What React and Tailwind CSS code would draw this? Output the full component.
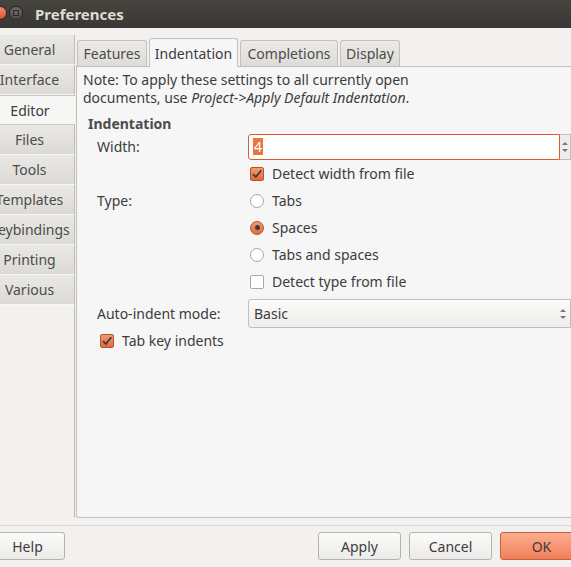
import React from "react";

const font = { fontFamily: '"Noto Sans", "Open Sans", sans-serif' };

const sideTabs = ["General", "Interface", "Editor", "Files", "Tools", "Templates", "Keybindings", "Printing", "Various"];
const topTabs = [
	{ label: "Features", w: "w-[70px]" },
	{ label: "Indentation", w: "w-[89px]" },
	{ label: "Completions", w: "w-[98px]" },
	{ label: "Display", w: "w-[60px]" },
];

const Check = ({ checked }) =>
	checked ? (
		<span className="w-[14px] h-[14px] rounded-[2px] border border-[#b8532b] bg-gradient-to-b from-[#f39a6f] to-[#e5683b] flex items-center justify-center">
			<svg width="12" height="12" viewBox="0 0 12 12">
				<path d="M2 6.2 L4.8 9 L10.3 2.2" fill="none" stroke="#3c3c3c" strokeWidth="1.8" />
			</svg>
		</span>
	) : (
		<span className="w-[14px] h-[14px] rounded-[2px] border border-[#a8a8a8] bg-white" />
	);

const Radio = ({ on }) =>
	on ? (
		<span className="w-[14px] h-[14px] rounded-full border border-[#b8532b] bg-gradient-to-b from-[#f39a6f] to-[#e5683b] flex items-center justify-center">
			<span className="w-[5px] h-[5px] rounded-full bg-[#3c3c3c]" />
		</span>
	) : (
		<span className="w-[14px] h-[14px] rounded-full border border-[#a8a8a8] bg-white" />
	);

const Row = ({ mark, label }) => (
	<div className="flex items-center gap-[8px] h-[27px] pl-[2px]">
		{mark}
		<span>{label}</span>
	</div>
);

const Arrows = () => (
	<svg width="8" height="14" viewBox="0 0 8 14">
		<path d="M1 5 L4 2 L7 5 Z" fill="#7a7a7a" />
		<path d="M1 9 L4 12 L7 9 Z" fill="#7a7a7a" />
	</svg>
);

const Btn = ({ children, className }) => (
	<div
		className={
			"h-[28px] rounded-[3px] border flex items-center justify-center " +
			(className || "border-[#b5b3ae] bg-gradient-to-b from-[#fbfbfa] to-[#ecebe9]")
		}
	>
		{children}
	</div>
);

export default function App() {
	return (
		<div className="w-[571px] h-[567px] overflow-hidden bg-[#f2f1f0] flex flex-col text-[14px] text-[#3c3c3c]" style={font}>
			<div className="h-[28px] shrink-0 bg-gradient-to-b from-[#45443f] to-[#393834] flex items-center relative">
				<span className="absolute left-[-7px] top-[6px] w-[14px] h-[14px] rounded-full bg-gradient-to-b from-[#f5896a] to-[#d8532b] border border-[#2a2926]" />
				<span className="absolute left-[9px] top-[6px] w-[14px] h-[14px] rounded-full bg-gradient-to-b from-[#6d6b66] to-[#4e4d49] border border-[#2a2926] flex items-center justify-center">
					<span className="w-[6px] h-[6px] border border-[#2e2d2a]" />
				</span>
				<span className="ml-[35px] font-bold text-[15px] text-[#dfdbd2]">Preferences</span>
			</div>

			<div className="flex flex-1 min-h-0 pt-[6px] pb-[7px]">
				<div className="w-[75px] shrink-0 overflow-hidden flex flex-col pt-[1px]">
					{sideTabs.map((t) => (
						<div
							key={t}
							className={
								"-ml-[15px] w-[90px] h-[30px] flex items-center justify-center whitespace-nowrap " +
								(t === "Editor"
									? "bg-[#f6f6f5] border-t border-b border-[#c9c6c1] text-[#3c3c3c]"
									: "bg-gradient-to-b from-[#eae8e5] to-[#dcdad6] border-b border-[#f7f6f5] border-r border-r-[#bfbcb7] text-[#4c4c4c]")
							}
						>
							{t}
						</div>
					))}
					<div className="flex-1 border-r border-[#bfbcb7]" />
				</div>

				<div className="flex-1 flex flex-col pl-[1px]">
					<div className="flex items-end h-[32px] pl-[1px] gap-[2px]">
						{topTabs.map((t) =>
							t.label === "Indentation" ? (
								<div
									key={t.label}
									className={t.w + " h-[29px] -mb-px bg-[#f6f6f6] border border-b-0 border-[#c3c0bb] rounded-t-[3px] flex items-center justify-center z-10"}
								>
									{t.label}
								</div>
							) : (
								<div
									key={t.label}
									className={t.w + " h-[26px] bg-gradient-to-b from-[#ebeae7] to-[#dedcd8] border border-b-0 border-[#c3c0bb] rounded-t-[3px] flex items-center justify-center text-[#4c4c4c]"}
								>
									{t.label}
								</div>
							)
						)}
					</div>
					<div className="flex-1 bg-[#f6f6f6] border border-r-0 border-[#c3c0bb] rounded-bl-[3px] pl-[6px] pt-[4px]">
						<p className="leading-[18px]">
							Note: To apply these settings to all currently open
							<br />
							documents, use <i>Project-&gt;Apply Default Indentation</i>.
						</p>
						<div className="mt-[8px] pl-[5px] font-bold text-[#4c4c4c] leading-[18px]">Indentation</div>
						<div className="grid grid-cols-[151px_1fr] pl-[14px]">
							<div className="h-[27px] flex items-center">Width:</div>
							<div className="h-[27px] flex items-center">
								<div className="flex-1 h-[26px] bg-white border border-[#e05a2b] rounded-l-[3px] flex items-center pl-[4px]">
									<span className="bg-[#e9753f] text-white leading-[17px] px-[1px]">4</span>
								</div>
								<div className="w-[11px] h-[26px] bg-[#eeedeb] border border-l-0 border-[#c3c0bb] flex items-center justify-center">
									<Arrows />
								</div>
							</div>
							<div />
							<Row mark={<Check checked />} label="Detect width from file" />
							<div className="h-[27px] flex items-center">Type:</div>
							<Row mark={<Radio />} label="Tabs" />
							<div />
							<Row mark={<Radio on />} label="Spaces" />
							<div />
							<Row mark={<Radio />} label="Tabs and spaces" />
							<div />
							<Row mark={<Check />} label="Detect type from file" />
							<div className="h-[31px] mt-[3px] flex items-center">Auto-indent mode:</div>
							<div className="h-[31px] mt-[3px] flex items-center">
								<div className="flex-1 h-[29px] border border-[#c3c0bb] rounded-l-[3px] bg-gradient-to-b from-[#fbfbfa] to-[#efeeec] flex items-center justify-between pl-[5px] pr-[3px]">
									<span>Basic</span>
									<Arrows />
								</div>
							</div>
						</div>
						<div className="pl-[15px] -mt-[2px]">
							<Row mark={<Check checked />} label="Tab key indents" />
						</div>
					</div>
				</div>
			</div>

			<div className="h-[42px] shrink-0 border-t border-[#dad8d4] flex items-start pt-[6px]">
				<div className="-ml-[10px] w-[75px]">
					<Btn>Help</Btn>
				</div>
				<div className="flex-1" />
				<div className="w-[83px]">
					<Btn>Apply</Btn>
				</div>
				<div className="w-[83px] ml-[8px]">
					<Btn>Cancel</Btn>
				</div>
				<div className="w-[83px] ml-[8px] -mr-[12px]">
					<Btn className="border-[#c4603a] bg-gradient-to-b from-[#fbad8f] to-[#f07f57]">OK</Btn>
				</div>
			</div>
		</div>
	);
}
